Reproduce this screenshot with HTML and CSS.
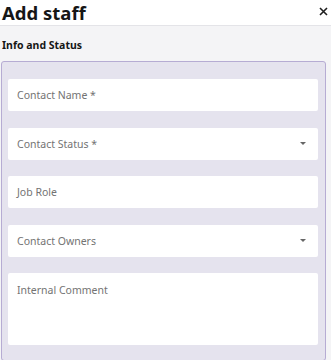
FILE: index.html
```html
<html lang="en"><head>
    <meta charset="UTF-8">
    <meta name="viewport" content="width=device-width, initial-scale=1.0">
    <title>Add staff</title>
    <link rel="stylesheet" href="styles.css">
  </head>
  <body>
    <header class="header">
      <h1>Add staff</h1>
      <svg class="close" width="9" height="9" viewBox="0 0 9 9"><path d="M1 1 L8 8 M8 1 L1 8" stroke="#1f1f1f" stroke-width="1.6"/></svg>
    </header>
    <main class="content">
      <h2 class="section-title">Info and Status</h2>
      <section class="card">
        <div class="field">Contact Name *</div>
        <div class="field select">Contact Status *<span class="caret"></span></div>
        <div class="field">Job Role</div>
        <div class="field select">Contact Owners<span class="caret"></span></div>
        <div class="field comment">Internal Comment</div>
      </section>
    </main>
  </body>
</html>
```
FILE: styles.css
```css
* {
    padding: 0;
    margin: 0;
    box-sizing: border-box;
}
body {
    background: #f4f4f6;
    font-family: 'Noto Sans', 'Open Sans', sans-serif;
    width: 331px;
    height: 360px;
    overflow: hidden;
}
.header {
    background: #fff;
    height: 26px;
    border-bottom: 1px solid #e4e4e8;
    display: flex;
    justify-content: space-between;
    align-items: center;
    padding: 0 3px 1px 2px;
}
.header h1 {
    font-size: 18.5px;
    font-weight: 700;
    color: #161616;
}
.close {
    margin-top: -2px;
}
.content {
    padding: 12px 0 0 1px;
}
.section-title {
    font-size: 10.5px;
    font-weight: 700;
    color: #161616;
    padding-left: 1px;
    height: 23px;
}
.card {
    width: 325px;
    height: 300px;
    background: #e5e3ee;
    border: 1px solid #b6acd3;
    border-radius: 3px;
    padding: 17px 7px 0 6px;
    display: flex;
    flex-direction: column;
    gap: 16.5px;
}
.field {
    flex: none;
    background: #fff;
    border-radius: 2px;
    height: 32px;
    display: flex;
    align-items: center;
    justify-content: space-between;
    padding: 0 12px 0 9px;
    font-size: 10.5px;
    color: #737373;
}
.comment {
    height: 72px;
    align-items: flex-start;
    padding-top: 10px;
}
.caret {
    width: 0;
    height: 0;
    border-left: 3px solid transparent;
    border-right: 3px solid transparent;
    border-top: 3px solid #666;
}
```
